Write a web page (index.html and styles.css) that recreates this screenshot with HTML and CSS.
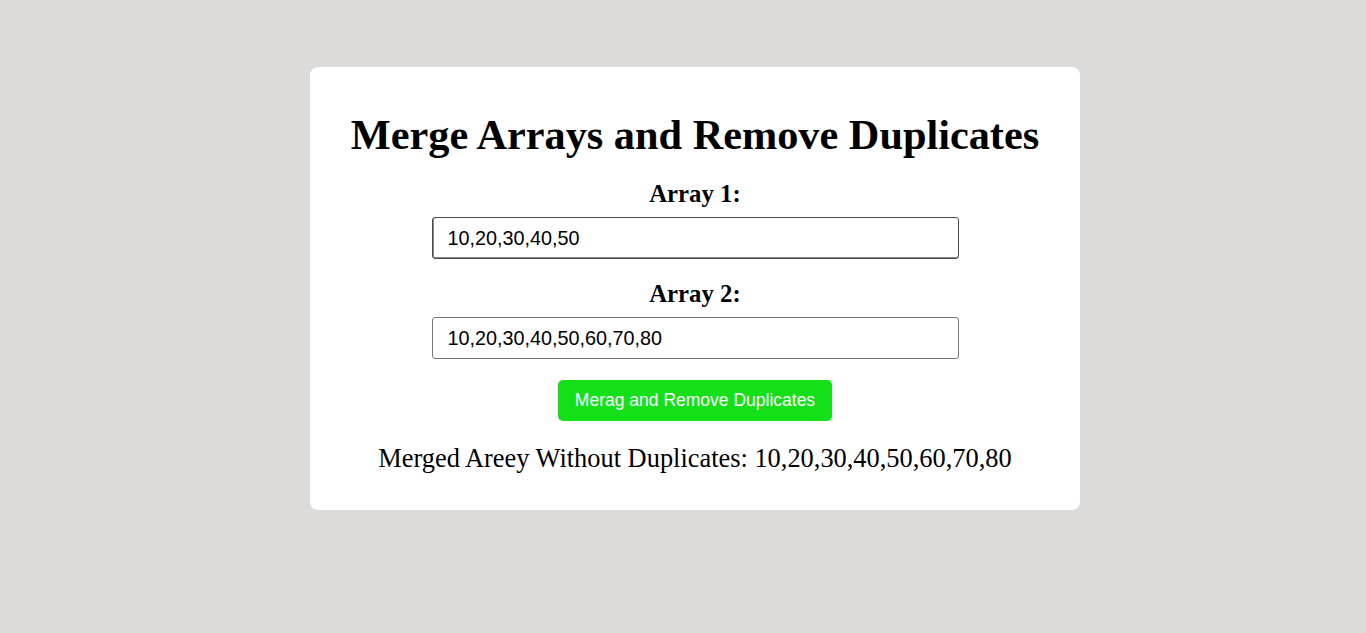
FILE: index.html
```
<!DOCTYPE html>
<html>
<head>
<meta charset="utf-8">
<link rel="stylesheet" href="styles.css">
</head>
<body>
<div class="card">
  <h1 class="title">Merge Arrays and Remove Duplicates</h1>
  <label class="label" for="a1">Array 1:</label>
  <input class="field field-active" id="a1" type="text" value="10,20,30,40,50">
  <label class="label" for="a2">Array 2:</label>
  <input class="field" id="a2" type="text" value="10,20,30,40,50,60,70,80">
  <button class="btn">Merag and Remove Duplicates</button>
  <p class="result">Merged Areey Without Duplicates: 10,20,30,40,50,60,70,80</p>
</div>
</body>
</html>
```
FILE: styles.css
```
html, body {
  margin: 0;
  padding: 0;
}
body {
  background: #dcdbd9;
  font-family: "Liberation Serif", "Times New Roman", serif;
  padding-top: 67px;
  padding-left: 24px;
}
.card {
  width: 770px;
  height: 443px;
  box-sizing: border-box;
  margin: 0 auto;
  background: #fff;
  border-radius: 8px;
  padding: 40px 20px 20px;
  display: flex;
  flex-direction: column;
  align-items: center;
}
.title {
  font-size: 42.3px;
  font-weight: bold;
  margin: 0 0 17px;
  line-height: 56px;
}
.label {
  font-size: 24.8px;
  font-weight: bold;
  line-height: 28px;
  margin-bottom: 9px;
}
.field {
  width: 527px;
  height: 42px;
  box-sizing: border-box;
  border: 1px solid #767676;
  border-radius: 3px;
  padding: 0 15px;
  font-family: "Liberation Sans", Arial, sans-serif;
  font-size: 19.8px;
  color: #000;
  margin-bottom: 21px;
}
.field-active {
  border: 1px solid #4a4a4a;
  box-shadow: inset 1px 0 0 #8a8a8a, inset 0 -1px 0 #8a8a8a;
  padding-left: 15px;
}
.btn {
  width: 274px;
  height: 41px;
  border: none;
  border-radius: 5px;
  background: #14e01a;
  color: #fff;
  font-family: "Liberation Sans", Arial, sans-serif;
  font-size: 17.5px;
}
.result {
  font-size: 26.4px;
  margin: 20px 0 0;
  line-height: 34px;
}
```
